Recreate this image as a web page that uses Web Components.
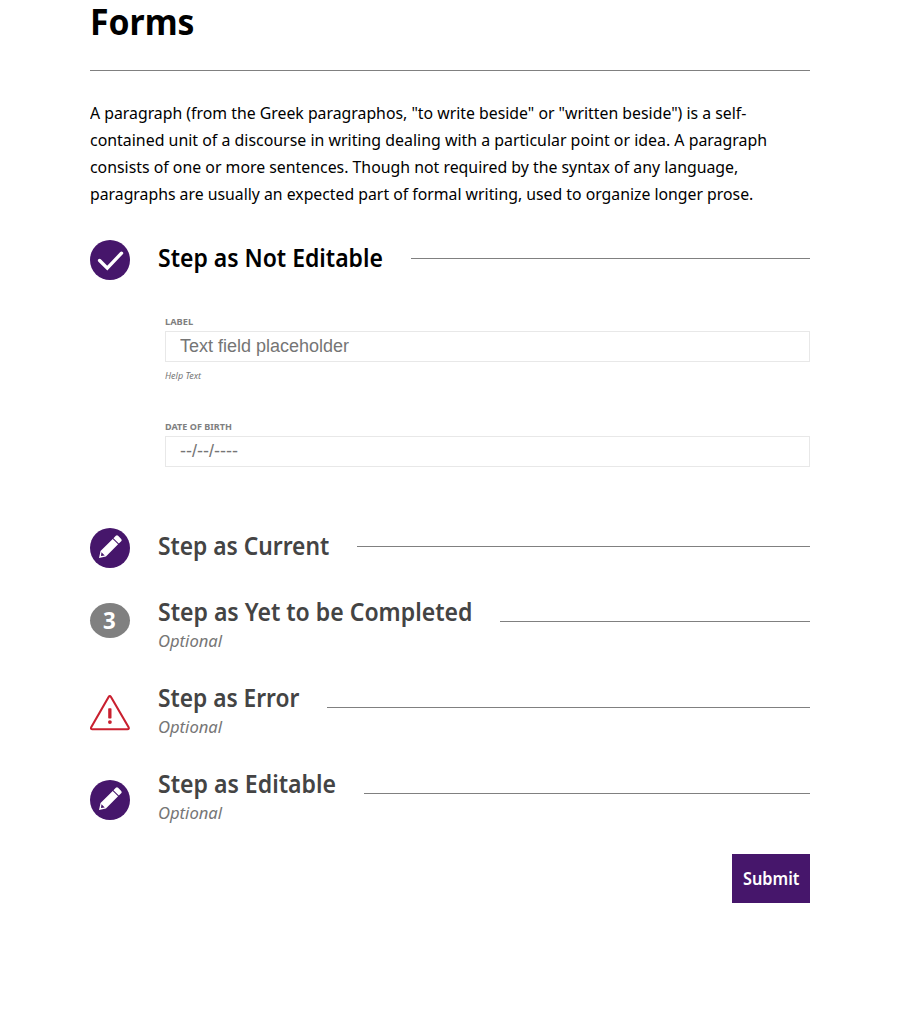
<!DOCTYPE html>
<html lang="en">
<head>
<meta charset="utf-8">
<title>Forms</title>
<style>
body { margin: 0; background: #fff; color: #000; font-family: "Noto Sans", "Open Sans", sans-serif; }
</style>
</head>
<body>
<forms-page></forms-page>
<script>
// One line of text, condensed horizontally to a given width.
class FitText extends HTMLElement {
  connectedCallback() {
    if (this.shadowRoot) return;
    this.attachShadow({ mode: 'open' }).innerHTML = `
      <style>
        :host { display: block; flex: none; white-space: nowrap; }
        span { display: inline-block; transform-origin: 0 0; vertical-align: top; }
      </style><span><slot></slot></span>`;
    const w = +this.getAttribute('width');
    const span = this.shadowRoot.querySelector('span');
    this.style.width = w + 'px';
    span.style.transform = `scaleX(${w / span.offsetWidth})`;
  }
}

const ICONS = {
  check: `<svg width="40" height="40" viewBox="0 0 40 40"><circle cx="20" cy="20" r="20" fill="#46166b"/><path d="M9.6 20.5l7.7 7.6 14.2-14.9" fill="none" stroke="#fff" stroke-width="3.4" stroke-linecap="round"/></svg>`,
  pencil: `<svg width="40" height="40" viewBox="0 0 40 40"><circle cx="20" cy="20" r="20" fill="#46166b"/><g transform="translate(9 30) rotate(-45)" fill="#fff"><path fill-rule="evenodd" d="M0 0l6-3.8H23.2v7.6H6zM2.8 0L5.8 2.3V-2.3z"/><path d="M24.2-3.8h3.4q1.6 0 1.6 1.6v4.4q0 1.6-1.6 1.6h-3.4z"/></g></svg>`,
  error: `<svg width="40" height="36" viewBox="0 0 40 36"><path d="M18.6 2q1.2-1.8 2.4 0l17.6 30.3q.8 1.9-1.2 1.9H2.4q-2 0-1.2-1.9z" fill="none" stroke="#c9202f" stroke-width="2.1" stroke-linejoin="round"/><rect x="18.2" y="13.3" width="3.3" height="10.2" rx=".7" fill="#c9202f"/><circle cx="19.9" cy="27.1" r="1.9" fill="#c9202f"/></svg>`,
  number: `<b><fit-text width="13">3</fit-text></b>`
};

class FormStep extends HTMLElement {
  connectedCallback() {
    if (this.shadowRoot) return;
    const a = n => this.getAttribute(n);
    const opt = this.hasAttribute('optional');
    this.attachShadow({ mode: 'open' }).innerHTML = `
      <style>
        :host { display: block; color: #444; }
        :host([done]) { color: #000; }
        header { display: flex; align-items: flex-start; gap: 28px; }
        .icon { width: 40px; flex: none; margin-top: ${a('icon-top') || 0}px; }
        svg { display: block; }
        b { display: flex; box-sizing: border-box; padding-left: 13px; height: 35px; border-radius: 50%; background: #808080;
            color: #fff; font-size: 24px; line-height: 34px; }
        .text { flex: none; }
        h2 { margin: 0; padding-top: ${opt ? 0 : 1}px; font-size: 24.5px; font-weight: 600; line-height: 34px; }
        em { display: block; width: 64px; margin-top: -2px; color: #767676; font-size: 17px; line-height: 27px; }
        .rule { flex: 1; height: 1px; background: #808080; margin-top: ${opt ? 26 : 18}px; }
      </style>
      <header>
        <div class="icon">${ICONS[a('icon')]}</div>
        <div class="text" style="width:${a('width')}px">
          <h2><fit-text width="${a('width')}">${a('heading')}</fit-text></h2>
          ${opt ? '<em><fit-text width="64.5">Optional</fit-text></em>' : ''}
        </div>
        <div class="rule"></div>
      </header>
      <slot></slot>`;
  }
}

class FormField extends HTMLElement {
  connectedCallback() {
    if (this.shadowRoot) return;
    const a = n => this.getAttribute(n);
    this.attachShadow({ mode: 'open' }).innerHTML = `
      <style>
        :host { display: block; color: #767676; }
        label { display: block; font-size: 9.6px; font-weight: 700; line-height: 14px; margin-bottom: 2px; color: #808080; }
        input { display: block; box-sizing: border-box; width: 100%; height: 31px; margin: 0; padding: 0 14px;
                border: 1px solid #e8e8e8; background: #fff; font: 18px "Liberation Sans", Arial, sans-serif; outline: 0; }
        input::placeholder { color: #757575; opacity: 1; }
        em { display: block; font-size: 9.6px; line-height: 14px; margin: 7px 0 -1px; }
      </style>
      <label for="f"><fit-text width="${a('width')}">${a('label')}</fit-text></label>
      <input id="f" placeholder="${a('placeholder')}">
      ${a('help') ? `<em><fit-text width="36.5">${a('help')}</fit-text></em>` : ''}`;
  }
}

class SubmitButton extends HTMLElement {
  connectedCallback() {
    if (this.shadowRoot) return;
    this.attachShadow({ mode: 'open' }).innerHTML = `
      <style>
        :host { display: flex; justify-content: flex-end; }
        button { width: 78px; height: 49px; padding: 1px 0 0 11px; border: 0; background: #46166b; color: #fff;
                 font: 600 17px/48px "Noto Sans", sans-serif; text-align: left; }
      </style><button type="button"><fit-text width="56.5"><slot></slot></fit-text></button>`;
  }
}

class FormsPage extends HTMLElement {
  connectedCallback() {
    if (this.shadowRoot) return;
    this.attachShadow({ mode: 'open' }).innerHTML = `
      <style>
        :host { display: block; box-sizing: border-box; width: 900px; height: 1024px; padding: 0 90px; }
        h1 { margin: 0; height: 70px; border-bottom: 1px solid #808080; font-size: 36px; font-weight: 700; line-height: 44px; }
        p { margin: 28px 0 33px; font-size: 17px; line-height: 27px; }
        .fields { padding: 35px 0 61px 75px; display: grid; gap: 38px; }
        .steps { display: grid; gap: 27px; margin-bottom: 28px; }
      </style>
      <h1><fit-text width="105">Forms</fit-text></h1>
      <p>
        <fit-text width="656">A paragraph (from the Greek paragraphos, "to write beside" or "written beside") is a self-</fit-text>
        <fit-text width="677.5">contained unit of a discourse in writing dealing with a particular point or idea. A paragraph</fit-text>
        <fit-text width="648">consists of one or more sentences. Though not required by the syntax of any language,</fit-text>
        <fit-text width="663.5">paragraphs are usually an expected part of formal writing, used to organize longer prose.</fit-text>
      </p>
      <form-step done icon="check" heading="Step as Not Editable" width="225">
        <div class="fields">
          <form-field label="LABEL" width="28" placeholder="Text field placeholder" help="Help Text"></form-field>
          <form-field label="DATE OF BIRTH" width="67" placeholder="--/--/----"></form-field>
        </div>
      </form-step>
      <div class="steps">
        <form-step icon="pencil" heading="Step as Current" width="171"></form-step>
        <form-step optional icon="number" icon-top="8" heading="Step as Yet to be Completed" width="314"></form-step>
        <form-step optional icon="error" icon-top="14" heading="Step as Error" width="141"></form-step>
        <form-step optional icon="pencil" icon-top="13" heading="Step as Editable" width="178"></form-step>
      </div>
      <submit-button>Submit</submit-button>`;
  }
}

customElements.define('fit-text', FitText);
customElements.define('form-step', FormStep);
customElements.define('form-field', FormField);
customElements.define('submit-button', SubmitButton);
customElements.define('forms-page', FormsPage);
</script>
</body>
</html>
